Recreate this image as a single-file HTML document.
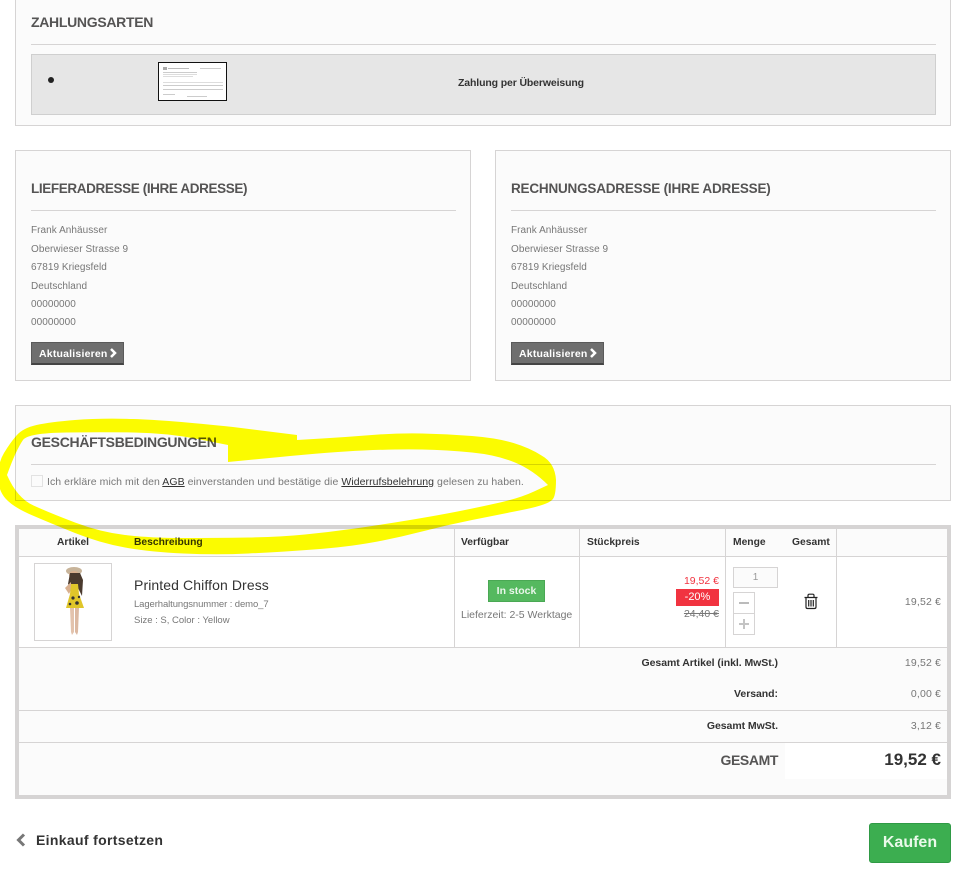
<!DOCTYPE html>
<html lang="de">
<head>
<meta charset="utf-8">
<title>Bestellung</title>
<style>
html,body{margin:0;padding:0;background:#fff}
body{position:relative;width:964px;height:872px;overflow:hidden;font-family:"Liberation Sans",sans-serif;font-size:11px;color:#777}
.b{position:absolute;box-sizing:border-box}
.panel{background:#fbfbfb;border:1px solid #d6d4d4}
.t{position:absolute;white-space:nowrap;line-height:16px;height:16px}
.r{text-align:right}
.h{font-weight:bold;font-size:14px;color:#555454}
.hr{position:absolute;height:1px;background:#d6d4d4}
.a{font-size:10px;letter-spacing:.05px;color:#777}
.btn{position:absolute;box-sizing:border-box;width:93px;height:23px;background:#6f6f6f;border:1px solid #5a5a5a;border-bottom:2px solid #444}
.btn span{position:absolute;left:7px;top:3px;font-weight:bold;font-size:10.5px;line-height:16px;color:#fff;letter-spacing:.2px}
.th{font-weight:bold;font-size:10.3px;color:#333}
.line{position:absolute;background:#d6d4d4}
.s{font-weight:bold;font-size:10.5px;color:#333;letter-spacing:-.05px}
.v{font-size:10.5px;color:#777;letter-spacing:.15px}
a{color:#333;text-decoration:underline}
</style>
</head>
<body>

<div class="b panel" style="left:15px;top:-10px;width:936px;height:136px"></div>
<div class="t h" style="left:31px;top:14px;letter-spacing:-.3px">ZAHLUNGSARTEN</div>
<div class="hr" style="left:31px;top:44px;width:905px"></div>
<div class="b" style="left:31px;top:54px;width:905px;height:61px;background:#e6e6e6;border:1px solid #cfcfcf"></div>
<div class="b" style="left:48px;top:77px;width:6px;height:6px;border-radius:50%;background:#222"></div>
<div class="b" style="left:158px;top:62px;width:69px;height:39px;background:#fff;border:1px solid #111">
<svg width="67" height="37" viewBox="0 0 67 37" style="display:block">
<rect x="4" y="4" width="4" height="3" fill="#aaa"/><rect x="9" y="5" width="21" height="1" fill="#bbb"/><rect x="41" y="5" width="21" height="1" fill="#ccc"/>
<rect x="4" y="9" width="34" height="1" fill="#ccc"/><rect x="4" y="11" width="34" height="1" fill="#ddd"/><rect x="4" y="13" width="30" height="1" fill="#ddd"/>
<rect x="4" y="19" width="60" height="1" fill="#ddd"/><rect x="4" y="22" width="60" height="1" fill="#ccc"/><rect x="4" y="26" width="60" height="1" fill="#ccc"/>
<rect x="4" y="31" width="12" height="1" fill="#ccc"/><rect x="28" y="33" width="20" height="1" fill="#ccc"/>
</svg>
</div>
<div class="t" style="left:458px;top:75px;font-weight:bold;font-size:10.5px;letter-spacing:-.13px;color:#333">Zahlung per Überweisung</div>

<div class="b panel" style="left:15px;top:150px;width:456px;height:231px"></div>
<div class="t h" style="left:31px;top:181px;font-size:13.5px;letter-spacing:-.38px">LIEFERADRESSE (IHRE ADRESSE)</div>
<div class="hr" style="left:31px;top:210px;width:425px"></div>
<div class="t a" style="left:31px;top:223px">Frank Anhäusser</div>
<div class="t a" style="left:31px;top:242px">Oberwieser Strasse 9</div>
<div class="t a" style="left:31px;top:260px">67819 Kriegsfeld</div>
<div class="t a" style="left:31px;top:279px">Deutschland</div>
<div class="t a" style="left:31px;top:297px">00000000</div>
<div class="t a" style="left:31px;top:315px">00000000</div>
<div class="btn" style="left:31px;top:342px"><span>Aktualisieren</span>
<svg width="8" height="10" viewBox="0 0 8 10" style="position:absolute;left:77px;top:5px"><path d="M2 1L6 5L2 9" fill="none" stroke="#fff" stroke-width="2.500"/></svg></div>

<div class="b panel" style="left:495px;top:150px;width:456px;height:231px"></div>
<div class="t h" style="left:511px;top:181px;font-size:13.5px;letter-spacing:-.2px">RECHNUNGSADRESSE (IHRE ADRESSE)</div>
<div class="hr" style="left:511px;top:210px;width:425px"></div>
<div class="t a" style="left:511px;top:223px">Frank Anhäusser</div>
<div class="t a" style="left:511px;top:242px">Oberwieser Strasse 9</div>
<div class="t a" style="left:511px;top:260px">67819 Kriegsfeld</div>
<div class="t a" style="left:511px;top:279px">Deutschland</div>
<div class="t a" style="left:511px;top:297px">00000000</div>
<div class="t a" style="left:511px;top:315px">00000000</div>
<div class="btn" style="left:511px;top:342px"><span>Aktualisieren</span>
<svg width="8" height="10" viewBox="0 0 8 10" style="position:absolute;left:77px;top:5px"><path d="M2 1L6 5L2 9" fill="none" stroke="#fff" stroke-width="2.500"/></svg></div>

<div class="b panel" style="left:15px;top:405px;width:936px;height:96px"></div>
<div class="t h" style="left:31px;top:434px;letter-spacing:-.29px">GESCHÄFTSBEDINGUNGEN</div>
<div class="hr" style="left:31px;top:464px;width:905px"></div>
<div class="b" style="left:31px;top:475px;width:12px;height:12px;background:#fbfbfb;border:1px solid #e2e2e2"></div>
<div class="t" style="left:47px;top:474px;font-size:10.5px;letter-spacing:.06px;color:#777">Ich erkläre mich mit den <a>AGB</a> einverstanden und bestätige die <a>Widerrufsbelehrung</a> gelesen zu haben.</div>

<div class="b" style="left:15px;top:525px;width:936px;height:274px;background:#fbfbfb;border:4px solid #d6d4d4"></div>
<div class="b" style="left:19px;top:557px;width:928px;height:90px;background:#fff"></div>
<div class="line" style="left:19px;top:556px;width:928px;height:1px"></div>
<div class="line" style="left:19px;top:647px;width:928px;height:1px"></div>
<div class="line" style="left:19px;top:710px;width:928px;height:1px"></div>
<div class="line" style="left:19px;top:742px;width:928px;height:1px"></div>
<div class="line" style="left:454px;top:529px;width:1px;height:118px"></div>
<div class="line" style="left:579px;top:529px;width:1px;height:118px"></div>
<div class="line" style="left:725px;top:529px;width:1px;height:118px"></div>
<div class="line" style="left:836px;top:529px;width:1px;height:118px"></div>
<div class="b" style="left:785px;top:743px;width:162px;height:36px;background:#fff"></div>

<div class="t th" style="left:57px;top:535px">Artikel</div>
<div class="t th" style="left:134px;top:535px">Beschreibung</div>
<div class="t th" style="left:461px;top:535px">Verfügbar</div>
<div class="t th" style="left:587px;top:535px">Stückpreis</div>
<div class="t th" style="left:733px;top:535px">Menge</div>
<div class="t th" style="left:792px;top:535px">Gesamt</div>

<div class="b" style="left:34px;top:563px;width:78px;height:78px;background:#fff;border:1px solid #d6d4d4">
<svg width="76" height="76" viewBox="0 0 76 76" style="display:block">
<ellipse cx="39" cy="7" rx="8" ry="4" fill="#c8b49a"/>
<ellipse cx="39" cy="11" rx="5" ry="4" fill="#d9b08f"/>
<path d="M35 9L33 20L37 24L43 24L47 32L48 16L45 9Z" fill="#4a3a2e"/>
<path d="M36 18L30 24L34 30L36 26Z" fill="#d9b08f"/>
<path d="M36 20L43 20L44 30L49 44L31 44L35 30Z" fill="#e0c62a"/>
<circle cx="38" cy="34" r="1.6" fill="#333"/><circle cx="42" cy="39" r="1.8" fill="#333"/><circle cx="35" cy="40" r="1.3" fill="#333"/><circle cx="44" cy="33" r="1.2" fill="#333"/>
<path d="M35 44L39 44L39 68L37 71L36 68Z" fill="#e3c3ad"/>
<path d="M40 44L44 44L43 68L42 71L40 68Z" fill="#dcb9a2"/>
</svg>
</div>
<div class="t" style="left:134px;top:577px;font-size:14px;letter-spacing:.1px;color:#333">Printed Chiffon Dress</div>
<div class="t" style="left:134px;top:597px;font-size:9.5px;color:#777;letter-spacing:-.1px">Lagerhaltungsnummer : demo_7</div>
<div class="t" style="left:134px;top:613px;font-size:9.5px;color:#777">Size : S, Color : Yellow</div>

<div class="b" style="left:488px;top:580px;width:57px;height:22px;background:#55b95f;border:1px solid #4aa854;color:#e9f7ea;font-weight:bold;font-size:10.5px;line-height:20px;text-align:center">In stock</div>
<div class="t" style="left:461px;top:607px;font-size:10.5px;color:#777">Lieferzeit: 2-5 Werktage</div>

<div class="t r" style="right:245px;top:573px;font-size:10.5px;color:#f13340">19,52 €</div>
<div class="b" style="left:676px;top:589px;width:43px;height:17px;background:#f13340;color:#fff;font-size:11px;line-height:17px;text-align:center">-20%</div>
<div class="t r" style="right:245px;top:606px;font-size:10.5px;color:#777;text-decoration:line-through">24,40 €</div>

<div class="b" style="left:733px;top:567px;width:45px;height:21px;background:#fbfbfb;border:1px solid #d6d4d4;color:#999;font-size:10px;line-height:19px;text-align:center">1</div>
<div class="b" style="left:733px;top:592px;width:22px;height:22px;background:#fff;border:1px solid #d6d4d4"></div>
<div class="b" style="left:733px;top:613px;width:22px;height:22px;background:#fff;border:1px solid #d6d4d4"></div>
<div class="b" style="left:739px;top:602px;width:10px;height:2px;background:#bbb"></div>
<div class="b" style="left:739px;top:623px;width:10px;height:2px;background:#c4c4c4"></div>
<div class="b" style="left:743px;top:619px;width:2px;height:10px;background:#c4c4c4"></div>

<svg width="16" height="17" viewBox="0 0 16 17" style="position:absolute;left:803px;top:593px">
<path d="M1.500 4.500H14.500M5 4.500V2.500Q5 1.200 6.300 1.200H9.700Q11 1.200 11 2.500V4.500M3 4.500V14Q3 15.500 4.500 15.500H11.500Q13 15.500 13 14V4.500M5.700 7V13.500M8 7V13.500M10.300 7V13.500" fill="none" stroke="#222" stroke-width="1.200"/>
</svg>

<div class="t r v" style="right:23px;top:594px">19,52 €</div>

<div class="t r s" style="right:186px;top:655px">Gesamt Artikel (inkl. MwSt.)</div>
<div class="t r v" style="right:23px;top:655px">19,52 €</div>
<div class="t r s" style="right:186px;top:686px">Versand:</div>
<div class="t r v" style="right:23px;top:686px">0,00 €</div>
<div class="t r s" style="right:186px;top:718px">Gesamt MwSt.</div>
<div class="t r v" style="right:23px;top:718px">3,12 €</div>
<div class="t r h" style="right:186px;top:752px;letter-spacing:-.4px">GESAMT</div>
<div class="t r" style="right:23px;top:752px;font-weight:bold;font-size:17px;color:#333">19,52 €</div>

<svg width="12" height="14" viewBox="0 0 12 14" style="position:absolute;left:15px;top:833px"><path d="M9 1.500L3.500 7L9 12.500" fill="none" stroke="#777" stroke-width="3"/></svg>
<div class="t" style="left:36px;top:832px;font-weight:bold;font-size:14px;letter-spacing:.33px;color:#333">Einkauf fortsetzen</div>

<div class="b" style="left:869px;top:823px;width:82px;height:40px;background:#3cae50;border:1px solid #2f9a45;border-radius:3px;color:#eafaea;font-weight:bold;font-size:16px;line-height:38px;text-align:center">Kaufen</div>

<svg width="964" height="872" viewBox="0 0 964 872" style="position:absolute;left:0;top:0;mix-blend-mode:multiply;pointer-events:none">
<path fill="#ffff00" d="M297 435L233 427Q167 420 133.500 419Q100 418 75 420Q50 422 36.500 425Q23 428 16.500 435.500Q10 443 4 453Q-2 463 -2 476.500Q-2 490 5.500 498.500Q13 507 31.500 515Q50 523 75 533Q100 543 125 547.500Q150 552 183.500 553.500Q217 555 248.500 553.500Q280 552 313.500 549.500Q347 547 372 542.500Q397 538 422 531.500Q447 525 472 520Q497 515 522 510Q547 505 552 500Q556 497 556 480Q555 463 541.500 455.500Q530 448 513.500 443Q497 438 472 436Q447 434 422 433.500Q397 433 372 435Q347 437 322 438.500L297 440L228 445L228 462L280 457Q330 452 363.500 450.500Q397 449 422 449.500Q447 450 472 452.500Q497 455 515 462.500Q533 470 548 485L534 491.500Q520 498 500 502.500Q480 507 460 511Q440 515 410 520Q380 525 355 528.500Q330 532 305 534.500Q280 537 248.500 537.500Q217 538 183.500 538Q150 538 125 535Q100 532 75 522.500Q50 513 33.500 505.500Q17 498 7 475Q16 450 23 440Q28 433 66.500 432.500Q100 432 133.500 432.500Q167 433 197.500 439L228 445L297 440Z"/>
</svg>

</body>
</html>
